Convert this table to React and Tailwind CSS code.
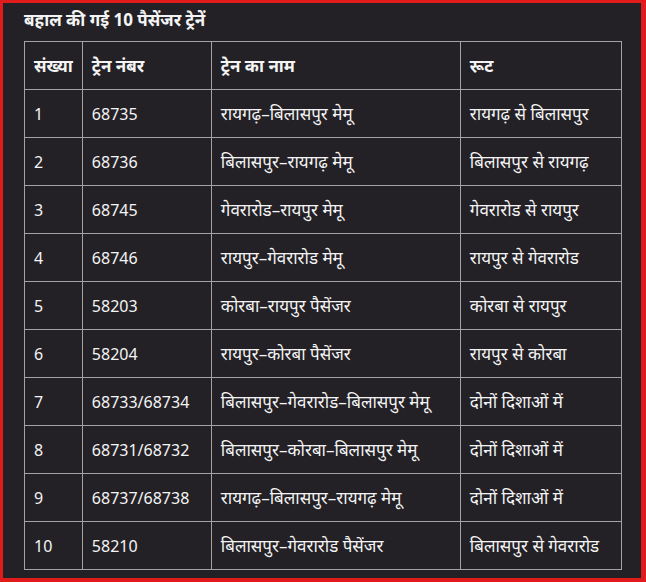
const rows = [
  ["1", "68735", "रायगढ़–बिलासपुर मेमू", "रायगढ़ से बिलासपुर"],
  ["2", "68736", "बिलासपुर–रायगढ़ मेमू", "बिलासपुर से रायगढ़"],
  ["3", "68745", "गेवरारोड–रायपुर मेमू", "गेवरारोड से रायपुर"],
  ["4", "68746", "रायपुर–गेवरारोड मेमू", "रायपुर से गेवरारोड"],
  ["5", "58203", "कोरबा–रायपुर पैसेंजर", "कोरबा से रायपुर"],
  ["6", "58204", "रायपुर–कोरबा पैसेंजर", "रायपुर से कोरबा"],
  ["7", "68733/68734", "बिलासपुर–गेवरारोड–बिलासपुर मेमू", "दोनों दिशाओं में"],
  ["8", "68731/68732", "बिलासपुर–कोरबा–बिलासपुर मेमू", "दोनों दिशाओं में"],
  ["9", "68737/68738", "रायगढ़–बिलासपुर–रायगढ़ मेमू", "दोनों दिशाओं में"],
  ["10", "58210", "बिलासपुर–गेवरारोड पैसेंजर", "बिलासपुर से गेवरारोड"],
];

const cell = "border border-[#a3a3a3] px-[9px] h-[48px] align-middle text-left";

export default function App() {
  return (
    <div
      className="w-[646px] h-[582px] bg-[#e11b1b] pt-[3px] pl-[3px] pr-[5px] pb-[4px]"
      style={{ fontFamily: '"Noto Sans", "Open Sans", sans-serif' }}
    >
      <div className="h-full bg-[#232126] text-[#f4f4f4] pl-[21px] pt-[5px]">
        <h2 className="text-[17px] font-bold leading-[24px] mb-[9px]">बहाल की गई 10 पैसेंजर ट्रेनें</h2>
        <table className="border-collapse w-[598px] text-[16px]">
          <thead>
            <tr className="text-[17px]">
              <th className={`${cell} w-[57px] font-bold`}>संख्या</th>
              <th className={`${cell} w-[129px] font-bold`}>ट्रेन नंबर</th>
              <th className={`${cell} w-[249px] font-bold`}>ट्रेन का नाम</th>
              <th className={`${cell} font-bold`}>रूट</th>
            </tr>
          </thead>
          <tbody>
            {rows.map((r) => (
              <tr key={r[0]}>
                {r.map((c, i) => (
                  <td key={i} className={`${cell} ${i > 1 ? "text-[17px]" : ""}`}>{c}</td>
                ))}
              </tr>
            ))}
          </tbody>
        </table>
      </div>
    </div>
  );
}
